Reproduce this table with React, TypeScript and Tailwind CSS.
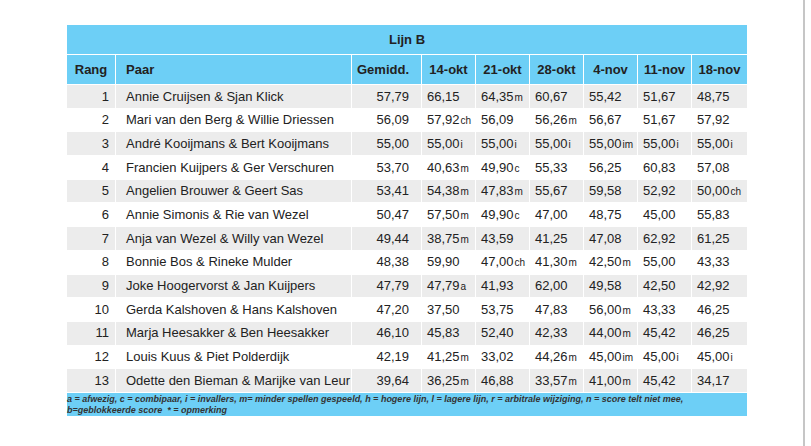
type Cell = [string, string?];

const rows: { rang: number; paar: string; gem: string; scores: Cell[] }[] = [
  { rang: 1, paar: "Annie Cruijsen & Sjan Klick", gem: "57,79", scores: [["66,15"], ["64,35", "m"], ["60,67"], ["55,42"], ["51,67"], ["48,75"]] },
  { rang: 2, paar: "Mari van den Berg & Willie Driessen", gem: "56,09", scores: [["57,92", "ch"], ["56,09"], ["56,26", "m"], ["56,67"], ["51,67"], ["57,92"]] },
  { rang: 3, paar: "André Kooijmans & Bert Kooijmans", gem: "55,00", scores: [["55,00", "i"], ["55,00", "i"], ["55,00", "i"], ["55,00", "im"], ["55,00", "i"], ["55,00", "i"]] },
  { rang: 4, paar: "Francien Kuijpers & Ger Verschuren", gem: "53,70", scores: [["40,63", "m"], ["49,90", "c"], ["55,33"], ["56,25"], ["60,83"], ["57,08"]] },
  { rang: 5, paar: "Angelien Brouwer & Geert Sas", gem: "53,41", scores: [["54,38", "m"], ["47,83", "m"], ["55,67"], ["59,58"], ["52,92"], ["50,00", "ch"]] },
  { rang: 6, paar: "Annie Simonis & Rie van Wezel", gem: "50,47", scores: [["57,50", "m"], ["49,90", "c"], ["47,00"], ["48,75"], ["45,00"], ["55,83"]] },
  { rang: 7, paar: "Anja van Wezel & Willy van Wezel", gem: "49,44", scores: [["38,75", "m"], ["43,59"], ["41,25"], ["47,08"], ["62,92"], ["61,25"]] },
  { rang: 8, paar: "Bonnie Bos & Rineke Mulder", gem: "48,38", scores: [["59,90"], ["47,00", "ch"], ["41,30", "m"], ["42,50", "m"], ["55,00"], ["43,33"]] },
  { rang: 9, paar: "Joke Hoogervorst & Jan Kuijpers", gem: "47,79", scores: [["47,79", "a"], ["41,93"], ["62,00"], ["49,58"], ["42,50"], ["42,92"]] },
  { rang: 10, paar: "Gerda Kalshoven & Hans Kalshoven", gem: "47,20", scores: [["37,50"], ["53,75"], ["47,83"], ["56,00", "m"], ["43,33"], ["46,25"]] },
  { rang: 11, paar: "Marja Heesakker & Ben Heesakker", gem: "46,10", scores: [["45,83"], ["52,40"], ["42,33"], ["44,00", "m"], ["45,42"], ["46,25"]] },
  { rang: 12, paar: "Louis Kuus & Piet Polderdijk", gem: "42,19", scores: [["41,25", "m"], ["33,02"], ["44,26", "m"], ["45,00", "im"], ["45,00", "i"], ["45,00", "i"]] },
  { rang: 13, paar: "Odette den Bieman & Marijke van Leur", gem: "39,64", scores: [["36,25", "m"], ["46,88"], ["33,57", "m"], ["41,00", "m"], ["45,42"], ["34,17"]] },
];

const dates = ["14-okt", "21-okt", "28-okt", "4-nov", "11-nov", "18-nov"];

export default function App() {
  return (
    <div className="w-[805px] h-[446px] border-r-2 border-[#c6c6c6] bg-white pl-[66px] pt-[24px] font-['Liberation_Sans',Arial,sans-serif] text-[13px] text-[#222]">
      <table className="border-separate border-spacing-[1px] w-[682px] table-fixed">
        <colgroup>
          <col className="w-[48px]" />
          <col className="w-[235px]" />
          <col className="w-[69px]" />
          <col className="w-[53px]" />
          <col className="w-[53px]" />
          <col className="w-[53px]" />
          <col className="w-[53px]" />
          <col className="w-[53px]" />
          <col />
        </colgroup>
        <thead>
          <tr>
            <th colSpan={9} className="h-[29px] bg-[#6dcff6] font-bold text-center">
              Lijn B
            </th>
          </tr>
          <tr className="bg-[#6dcff6] font-bold">
            <th className="h-[29px] text-center">Rang</th>
            <th className="h-[29px] text-left pl-[10px]">Paar</th>
            <th className="h-[29px] text-left pl-[5px]">Gemidd.</th>
            {dates.map((d) => (
              <th key={d} className="h-[29px] text-center">
                {d}
              </th>
            ))}
          </tr>
        </thead>
        <tbody>
          {rows.map((r, i) => (
            <tr key={r.rang} className={i % 2 === 0 ? "bg-[#ececec]" : "bg-white"}>
              <td className="h-[22.7px] text-right pr-[6px]">{r.rang}</td>
              <td className="h-[22.7px] pl-[10px] whitespace-nowrap">{r.paar}</td>
              <td className="h-[22.7px] text-right pr-[12px]">{r.gem}</td>
              {r.scores.map(([v, s], j) => (
                <td key={j} className="h-[22.7px] pl-[5px] whitespace-nowrap">
                  {v}
                  {s && <span className="text-[10px] ml-[1px]">{s}</span>}
                </td>
              ))}
            </tr>
          ))}
          <tr>
            <td
              colSpan={9}
              className="h-[22px] bg-[#6dcff6] align-top pt-[1px] text-[9px] leading-[11px] italic font-bold text-[#333] whitespace-pre"
            >
              {"a = afwezig, c = combipaar, i = invallers, m= minder spellen gespeeld, h = hogere lijn, l = lagere lijn, r = arbitrale wijziging, n = score telt niet mee,\nb=geblokkeerde score  * = opmerking"}
            </td>
          </tr>
        </tbody>
      </table>
    </div>
  );
}
